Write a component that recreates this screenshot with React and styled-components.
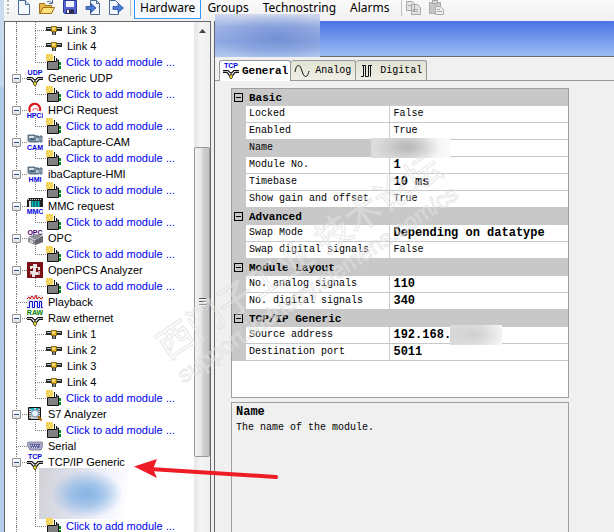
import React from 'react';
import styled, { createGlobalStyle, css } from 'styled-components';

const GlobalStyle = createGlobalStyle`
  * {
    box-sizing: border-box;
  }

  body {
    margin: 0;
    overflow: hidden;
    background: #f0f0f0;
    color: #000;
    font-family: "Liberation Sans", Arial, sans-serif;
    font-size: 11px;
  }

  button {
    margin: 0;
    padding: 0;
    border: 0;
    background: none;
    color: inherit;
    font: inherit;
  }

  svg {
    display: block;
    flex-shrink: 0;
  }
`;

/* ---------- window ---------- */

const Window = styled.div`
  position: relative;
  display: flex;
  height: 100vh;
  overflow: hidden;
`;

const WindowEdge = styled.div`
  width: 4px;
  background: linear-gradient(#c9dcf0, #c3d8ee 86px, #aecbe9 88px, #b4cdea);
`;

const Frame = styled.div`
  flex: 1;
  min-width: 0;
  display: flex;
  flex-direction: column;
`;

const Panels = styled.div`
  flex: 1;
  min-height: 0;
  display: flex;
  gap: 3px;
`;

/* ---------- toolbar ---------- */

const Toolbar = styled.div`
  display: flex;
  align-items: flex-start;
  height: 21px;
  padding-left: 3px;
  background: linear-gradient(#fafafa, #f0f0f0);
`;

const Grip = styled.div`
  width: 2px;
  height: 15px;
  margin-right: 7px;
  background: repeating-linear-gradient(#b8b8b8 0 2px, transparent 2px 4px);
`;

const ToolGroup = styled.div`
  display: flex;
  gap: 7px;
  padding-right: 3px;
`;

const ToolButton = styled.button`
  display: block;
  width: 16px;
  height: 16px;
`;

const Separator = styled.div`
  width: 1px;
  height: 16px;
  margin: 0 3px;
  background: #bdbdbd;
`;

const MenuButton = styled.button`
  height: 19px;
  padding: ${(p) => (p.$active ? '0 5px 2px' : '0 4px 2px')};
  margin-right: ${(p) => (p.$active ? '1px' : '4px')};
  border: 1px solid ${(p) => (p.$active ? '#3399ff' : 'transparent')};
  border-top: 0;
  background: ${(p) => (p.$active ? '#f7fafd' : 'transparent')};
  font-family: "Noto Sans", "Open Sans", sans-serif;
  font-size: 12px;
  line-height: 16px;
`;

/* ---------- module tree ---------- */

const TreePanel = styled.div`
  display: flex;
  width: 207px;
  border: 1px solid #666;
  border-bottom: 0;
  background: #fff;
`;

const Tree = styled.ul`
  flex: 1;
  min-width: 0;
  margin: 0;
  padding: 0;
  list-style: none;
  overflow: hidden;
`;

const TreeRow = styled.li`
  position: relative;
  display: flex;
  align-items: center;
  height: 16px;
  padding-left: 11px;
  white-space: nowrap;
`;

const HiddenRows = styled(TreeRow)`
  height: 48px;
`;

// Dotted connector: upper half turns into the horizontal arm, lower half runs on.
const Guide = styled.span`
  display: flex;
  flex-direction: column;
  align-self: stretch;
  width: 11px;
  margin-right: ${(p) => (p.$pass ? '8px' : 0)};
  flex-shrink: 0;

  &::before,
  &::after {
    content: "";
    flex: 1;
    border-left: 1px dotted #808080;
  }

  ${(p) => !p.$pass && css`
    &::before {
      border-bottom: 1px dotted #808080;
    }
  `}

  ${(p) => p.$last && css`
    &::after {
      border-left-color: transparent;
    }
  `}
`;

const Toggle = styled.button`
  position: absolute;
  left: 7px;
  top: 4px;
  width: 9px;
  height: 9px;
  border: 1px solid #919191;
  border-radius: 1px;
  background: linear-gradient(#2f4f9f, #2f4f9f) center / 5px 1px no-repeat,
    linear-gradient(#fff, #dedede);
`;

const TreeLabel = styled.span`
  margin-left: 5px;
`;

const AddLink = styled.a`
  margin-left: 4px;
  color: #0000f0;
  text-decoration: none;
`;

const TreeMask = styled.span`
  position: absolute;
  left: 34px;
  top: -2px;
  width: 88px;
  height: 51px;
  background: radial-gradient(ellipse 36px 24px at 48px 26px, #85b4e4, rgba(133, 180, 228, 0.7) 45%, rgba(133, 180, 228, 0)),
    linear-gradient(100deg, #d2d2d6, #dddfec 40%, #f3f4fd 75%, #fff);
`;

const ScrollBar = styled.div`
  display: flex;
  flex-direction: column;
  width: 16px;
  background: linear-gradient(90deg, #e6e6e6, #f4f4f4 40%, #efefef);
`;

const ScrollUp = styled.button`
  display: flex;
  align-items: center;
  justify-content: center;
  height: 17px;
`;

const ScrollSpace = styled.div`
  flex: ${(p) => p.$share};
`;

const ScrollThumb = styled.div`
  flex: 310;
  display: flex;
  align-items: center;
  justify-content: center;
  border: 1px solid #979797;
  border-radius: 2px;
  background: linear-gradient(90deg, #f5f5f5, #e6e6e6 45%, #cfcfd2 60%, #c4c4c8);
`;

const ThumbGrip = styled.span`
  width: 7px;
  height: 8px;
  background: repeating-linear-gradient(#555 0 1px, #fff 1px 2px, transparent 2px 3px);
`;

/* ---------- module settings ---------- */

const Settings = styled.div`
  flex: 1;
  min-width: 0;
  display: flex;
  flex-direction: column;
  border-left: 1px solid #666;
`;

const TitleBar = styled.div`
  position: relative;
  height: 36px;
  border-bottom: 1px solid #6a6a6a;
  background: linear-gradient(#4a72e4, #9cbdf3);
`;

const TitleMask = styled.div`
  position: absolute;
  left: 0;
  top: -7px;
  width: 105px;
  height: 43px;
  background: radial-gradient(ellipse 64px 24px at 62px 24px, rgba(108, 138, 210, 0.8), rgba(113, 143, 214, 0)),
    linear-gradient(#d3daee, #9fb3e4 30%, #90abe3 65%, #b0c7ee);
`;

const Tabs = styled.div`
  display: flex;
  align-items: flex-end;
  height: 24px;
  padding-left: 4px;
  border-bottom: 1px solid #9a9a9a;
`;

const Tab = styled.button`
  display: flex;
  align-items: center;
  gap: 5px;
  height: 20px;
  padding: 0 4px 0 3px;
  border: 1px solid #919b9c;
  border-left-width: ${(p) => (p.$active ? '1px' : 0)};
  border-bottom: 0;
  border-radius: 3px 3px 0 0;
  background: ${(p) => (p.$active ? '#fff' : 'linear-gradient(#e2e2d4, #efefe6)')};
  font-family: "Liberation Mono", monospace;
  font-size: ${(p) => (p.$active ? '11px' : '10px')};
  font-weight: ${(p) => (p.$active ? 'bold' : 'normal')};

  ${(p) => p.$active && css`
    gap: 3px;
    height: 21px;
    margin-bottom: -1px;
    padding-right: 2px;
  `}
`;

const TabPage = styled.div`
  flex: 1;
  min-height: 0;
  display: flex;
  flex-direction: column;
  gap: 4px;
  padding: 7px 45px 0 16px;
  font-family: "Liberation Mono", monospace;
`;

const GridBox = styled.div`
  padding-bottom: 36px;
  border: 1px solid #9f9f9f;
  background: #fff;
`;

const PropertyTable = styled.table`
  width: 100%;
  border-collapse: separate;
  border-spacing: 0;
  table-layout: fixed;
  font-size: 10px;
  line-height: 16px;
  text-align: left;
  white-space: nowrap;
`;

const GutterCol = styled.col`
  width: 14px;
`;

const NameCol = styled.col`
  width: 43%;
`;

const Gutter = styled.td`
  height: 17px;
  padding: 0;
  background: #c8c8c8;
`;

const GroupHead = styled.th`
  padding: 0 3px;
  height: 17px;
  background: #c8c8c8;
  font-size: 11px;
`;

const GroupToggle = styled.button`
  display: block;
  width: 9px;
  height: 9px;
  margin-left: 2px;
  border: 1px solid #000;
  background: linear-gradient(#000, #000) center / 5px 1px no-repeat;
`;

const NameCell = styled.th`
  padding: 0 3px;
  border-right: 1px solid #c8c8c8;
  border-bottom: 1px solid #c8c8c8;
  background: ${(p) => (p.$selected ? '#c8c8c8' : '#fff')};
  font-weight: normal;
`;

const ValueCell = styled.td`
  position: relative;
  padding: 0 3px;
  border-bottom: 1px solid #c8c8c8;
  font-size: ${(p) => (p.$bold ? '12px' : '10px')};
  font-weight: ${(p) => (p.$bold ? 'bold' : 'normal')};
`;

const ValueMask = styled.span`
  position: absolute;
  top: -2px;
  left: ${(p) => p.$left};
  width: ${(p) => p.$width};
  height: 20px;
  background: radial-gradient(ellipse 34px 18px at 45% 45%, ${(p) => p.$tone}, transparent),
    linear-gradient(90deg, #dcdcdc, #fafafa);
`;

const HelpBox = styled.div`
  flex: 1;
  padding: 1px 4px;
  border: 1px solid #9f9f9f;
  border-bottom: 0;
  font-size: 10px;
  line-height: 16px;
`;

const HelpTitle = styled.div`
  font-size: 12px;
  font-weight: bold;
`;

/* ---------- overlays ---------- */

const Watermark = styled.div`
  position: absolute;
  left: 140px;
  top: 236px;
  transform: rotate(-34deg);
  pointer-events: none;
  color: rgba(255, 255, 255, 0.3);
  font-family: "Liberation Sans", "Noto Sans CJK SC", sans-serif;
  font-size: 23px;
  line-height: 26px;
  white-space: nowrap;
  -webkit-text-stroke: 1px rgba(214, 214, 214, 0.6);
`;

const WatermarkTitle = styled.div`
  font-size: 36px;
  line-height: 38px;
`;

const ArrowMark = styled.svg`
  position: absolute;
  left: 130px;
  top: 455px;
  pointer-events: none;
`;

/* ---------- icons ---------- */

const Icon = ({ children, size = 16 }) => (
  <svg width={size} height={size} viewBox="0 0 16 16" aria-hidden="true">{children}</svg>
);

const Tag = ({ y, color = '#0000e0', children }) => (
  <text x="8" y={y} fill={color} textAnchor="middle" fontFamily="Liberation Sans" fontSize="7" fontWeight="bold">
    {children}
  </text>
);

const Junction = () => (
  <g>
    <path d="M0 7.500h5l3 3 3-3h5M0 9.500h4l2.500 3M16 9.500h-4l-2.500 3" fill="none" stroke="#111" strokeWidth="1.200" />
    <path d="M0 8.500h4M12 8.500h4" stroke="#aaa" />
    <path d="M8 10v3" stroke="#777" strokeWidth="2" />
    <path d="M6.500 12.500l1.500-1 1.500 1v2L8 16l-1.500-1.500z" fill="#e8d020" stroke="#333" strokeWidth=".8" />
  </g>
);

const Camera = () => (
  <g>
    <path d="M1 1h7l1 1h3v6H3L1 7z" fill="#7890a4" stroke="#3e5262" strokeWidth=".8" />
    <path d="M2 2h5v2H2z" fill="#d6e4ee" />
    <path d="M9 4h3v3H9z" fill="#a9c4d6" />
    <path d="M13 2h2v6h-2z" fill="#b8cbd9" stroke="#31475a" strokeWidth=".8" />
    <path d="M3 5h5" stroke="#263c4c" />
  </g>
);

const icons = {
  link: (
    <Icon>
      <path d="M0 5h16v4H0z" fill="#2b2b2b" />
      <path d="M1 6.500h14" stroke="#b5b5b5" />
      <path d="M6 9h4v4H6z" fill="#333" />
      <path d="M8 9v4" stroke="#c8c8c8" />
      <path d="M5.500 4.500h5v5h-5z" fill="#f0b820" stroke="#8a6c14" />
      <path d="M6.500 5.500h2v2h-2z" fill="#fff3b0" />
    </Icon>
  ),
  add: (
    <Icon>
      <path d="M1.500 7.500h9V6h2v9.500h-11z" fill="#808080" stroke="#111" />
      <path d="M8.500 2v5M10.500 4v3" stroke="#111" />
      <path d="M13 8h2v3h-2zM13 12h2v3h-2z" fill="#008a10" />
      <path d="M0 0h7v7H0z" fill="#ffe680" />
      <path d="M3.500 0v7M0 3.500h7M.5.5l6 6M6.500.5l-6 6" stroke="#e9b914" />
      <path d="M2.500 2.500h2v2h-2z" fill="#fffbd8" />
    </Icon>
  ),
  udp: <Icon><Junction /><Tag y="5">UDP</Tag></Icon>,
  tcp: <Icon><Junction /><Tag y="5">TCP</Tag></Icon>,
  raw: <Icon><Junction /><Tag y="5" color="#008000">RAW</Tag></Icon>,
  hpci: (
    <Icon>
      <path d="M3 10A5.500 5.500 0 1 1 13 9" fill="none" stroke="#d91920" strokeWidth="2.200" />
      <path d="M6 9a2.500 2.500 0 1 1 5 0" fill="none" stroke="#f27878" strokeWidth="1.200" />
      <Tag y="16">HPCi</Tag>
    </Icon>
  ),
  cam: <Icon><Camera /><Tag y="16">CAM</Tag></Icon>,
  hmi: <Icon><Camera /><Tag y="16">HMI</Tag></Icon>,
  mmc: (
    <Icon>
      <path d="M0 2l2-2h14v9H0z" fill="#222" />
      <path d="M2 3h2v6H2z" fill="#ddd" />
      <path d="M5.500 3v6M8.500 3v6M11.500 3v6" stroke="#00c4c4" strokeWidth="2" />
      <path d="M1 1.500h14" stroke="#ccc" strokeDasharray="1 1" />
      <Tag y="16">MMC</Tag>
    </Icon>
  ),
  opc: (
    <Icon>
      <path d="M1 7l8-3 7 2v6l-8 3-7-3z" fill="#8f8f98" />
      <path d="M1 7l7 3 8-4" fill="none" stroke="#dcdce0" />
      <path d="M8 10v5l8-3V6z" fill="#66666d" />
      <path d="M3 10l3 1v2l-3-1z" fill="#ddd" />
      <Tag y="5" color="#4b006e">OPC</Tag>
    </Icon>
  ),
  openpcs: (
    <Icon>
      <path d="M0 0h16v16H0z" fill="#7c1118" />
      <path d="M3 7V4h3V2h4v3h3v3h-2V6H9v4h2v3H8v2H5v-3H3V9h3V6H5v1z" fill="#e9e3e3" />
      <path d="M11 9h2v4h-2zM3 10h1v3H3z" fill="#c9a9ab" />
    </Icon>
  ),
  playback: (
    <Icon>
      <path d="M0 1h16v14H0z" fill="#e3e8ee" />
      <path d="M0 5l2-2 1 2 2-3 2 3 2-4 1 4 2-2 2 2 2-2" fill="none" stroke="#e01010" />
      <path d="M0 13.500h2.500v-6h3v6h2v-6h3v6h2v-6h2v6H16" fill="none" stroke="#1010e0" />
    </Icon>
  ),
  s7: (
    <Icon>
      <path d="M1.500 1.500h12v12h-12z" fill="#c8d0d6" stroke="#111" />
      <path d="M3 2v11M12 2v11" stroke="#111" strokeDasharray="1 1" />
      <path d="M4 3h3M9 3h2" stroke="#00b7c8" strokeWidth="2" />
      <circle cx="8" cy="7.500" r="3.500" fill="#e2f2ff" stroke="#78909f" />
      <path d="M11 10.500l3.500 4" stroke="#b07018" strokeWidth="2.500" />
    </Icon>
  ),
  serial: (
    <Icon>
      <path d="M1 4h14l1 3-2 5H3L0 7z" fill="#a9a9c6" stroke="#77779a" strokeWidth=".8" />
      <path d="M3 6h10l-1 4H4z" fill="#5c5c98" />
      <path d="M4 7.500h8M5 9.500h6" stroke="#e0e0f0" strokeDasharray="1 1" />
    </Icon>
  ),
  analog: (
    <Icon>
      <path d="M1 9C2 4 3 2.500 4.500 2.500S7 5 8 8s2 5.500 3.500 5.500S14 12 15 8" fill="none" stroke="#111" />
    </Icon>
  ),
  digital: (
    <Icon>
      <path d="M2 13.500h2.500v-11h2v11h3v-11h2v11M3 2.500h2M11 2.500h2" fill="none" stroke="#111" />
    </Icon>
  ),
  file: (
    <Icon>
      <path d="M2.500.5h7l4 4v10h-11z" fill="#f4f9ff" stroke="#4b6b95" />
      <path d="M9.500.5v4h4" fill="#cfe0f4" stroke="#4b6b95" />
    </Icon>
  ),
  open: (
    <Icon>
      <path d="M.5 13.500v-10h5l1 2h6v8z" fill="#e7b84a" stroke="#a06f13" />
      <path d="M1 13.500l3-6h11.500l-3 6z" fill="#ffdf7e" stroke="#a06f13" />
      <path d="M8 2q3-2 5 1M13.500 0v3.500H10" fill="none" stroke="#4c6e9e" />
    </Icon>
  ),
  save: (
    <Icon>
      <path d="M1.500.5h13v13h-12l-1-1z" fill="#5464d4" stroke="#2c3994" />
      <path d="M4 1h8v6H4z" fill="#eef1ff" />
      <path d="M4 9.500h8v4H4z" fill="#2a2a48" />
      <path d="M5 10h2v3H5z" fill="#eee" />
    </Icon>
  ),
  importFile: (
    <Icon>
      <path d="M5.500.5h6l3 3v11h-9z" fill="#f4f9ff" stroke="#4b6b95" />
      <path d="M11.500.5v3h3" fill="none" stroke="#4b6b95" />
      <path d="M1 6.500h5V3.500l5 4.500-5 4.500v-3H1z" fill="#4f7ed8" stroke="#234f9c" strokeWidth=".8" />
    </Icon>
  ),
  exportFile: (
    <Icon>
      <path d="M1.500.5h6l3 3v11h-9z" fill="#f4f9ff" stroke="#4b6b95" />
      <path d="M5 6.500h5V3.500l5.500 4.500-5.500 4.500v-3H5z" fill="#4f7ed8" stroke="#234f9c" strokeWidth=".8" />
    </Icon>
  ),
  copy: (
    <Icon>
      <path d="M1.500 1.500h6l2 2v7h-8zM6.500 4.500h6l3 3v7h-9z" fill="#e2e2e2" stroke="#a9a9a9" />
      <path d="M3 5.500h3M8 9.500h5M8 11.500h5" stroke="#a9a9a9" />
    </Icon>
  ),
  paste: (
    <Icon>
      <path d="M1.500 2.500h11v11h-11z" fill="#c6c6c6" stroke="#a9a9a9" />
      <path d="M4.500.5h5v3h-5z" fill="#ddd" stroke="#a0a0a0" />
      <path d="M7.500 6.500h5l3 3v5h-8z" fill="#eee" stroke="#a9a9a9" />
      <path d="M9 9.500h3M9 11.500h5" stroke="#a9a9a9" />
    </Icon>
  ),
};

/* ---------- data ---------- */

const link = (label) => ({ icon: 'link', label, level: 1 });
const root = (icon, label, leaf) => ({ icon, label, level: 0, leaf });
const add = { icon: 'add', label: 'Click to add module ...', level: 1, add: true };

const treeRows = [
  link('Link 3'), link('Link 4'), add,
  root('udp', 'Generic UDP'), add,
  root('hpci', 'HPCi Request'), add,
  root('cam', 'ibaCapture-CAM'), add,
  root('hmi', 'ibaCapture-HMI'), add,
  root('mmc', 'MMC request'), add,
  root('opc', 'OPC'), add,
  root('openpcs', 'OpenPCS Analyzer'), add,
  root('playback', 'Playback', true),
  root('raw', 'Raw ethernet'),
  link('Link 1'), link('Link 2'), link('Link 3'), link('Link 4'), add,
  root('s7', 'S7 Analyzer'), add,
  root('serial', 'Serial', true),
  root('tcp', 'TCP/IP Generic'),
  { hidden: true },
  add,
];

const groups = [
  {
    title: 'Basic',
    items: [
      { name: 'Locked', value: 'False' },
      { name: 'Enabled', value: 'True' },
      { name: 'Name', value: '', selected: true, mask: { $left: '-19px', $width: '79px', $tone: '#b5b5b5' } },
      { name: 'Module No.', value: '1', bold: true },
      { name: 'Timebase', value: '10 ms', bold: true },
      { name: 'Show gain and offset', value: 'True' },
    ],
  },
  {
    title: 'Advanced',
    items: [
      { name: 'Swap Mode', value: 'Depending on datatype', bold: true },
      { name: 'Swap digital signals', value: 'False' },
    ],
  },
  {
    title: 'Module Layout',
    items: [
      { name: 'No. analog signals', value: '110', bold: true },
      { name: 'No. digital signals', value: '340', bold: true },
    ],
  },
  {
    title: 'TCP/IP Generic',
    items: [
      { name: 'Source address', value: '192.168.', bold: true, mask: { $left: '60px', $width: '52px', $tone: '#cfcfcf' } },
      { name: 'Destination port', value: '5011', bold: true },
    ],
  },
];

/* ---------- components ---------- */

function TreeItem({ row }) {
  if (row.hidden) {
    return (
      <HiddenRows>
        <Guide $pass />
        <Guide $pass />
        <TreeMask />
      </HiddenRows>
    );
  }

  if (row.level === 0) {
    return (
      <TreeRow>
        <Guide />
        {!row.leaf && <Toggle aria-label={`Collapse ${row.label}`} />}
        {icons[row.icon]}
        <TreeLabel>{row.label}</TreeLabel>
      </TreeRow>
    );
  }

  return (
    <TreeRow>
      <Guide $pass />
      <Guide $last={row.add} />
      {icons[row.icon]}
      {row.add ? <AddLink href="#add">{row.label}</AddLink> : <TreeLabel>{row.label}</TreeLabel>}
    </TreeRow>
  );
}

function PropertyGrid() {
  return (
    <PropertyTable>
      <colgroup>
        <GutterCol />
        <NameCol />
        <col />
      </colgroup>
      {groups.map((group) => (
        <tbody key={group.title}>
          <tr>
            <Gutter><GroupToggle aria-label={`Collapse ${group.title}`} /></Gutter>
            <GroupHead colSpan={2} scope="rowgroup">{group.title}</GroupHead>
          </tr>
          {group.items.map((item) => (
            <tr key={item.name}>
              <Gutter />
              <NameCell scope="row" $selected={item.selected}>{item.name}</NameCell>
              <ValueCell $bold={item.bold}>
                {item.value}
                {item.mask && <ValueMask {...item.mask} />}
              </ValueCell>
            </tr>
          ))}
        </tbody>
      ))}
    </PropertyTable>
  );
}

function App() {
  return (
    <>
      <GlobalStyle />
      <Window>
        <WindowEdge />
        <Frame>
          <Toolbar>
            <Grip />
            <ToolGroup>
              <ToolButton aria-label="New">{icons.file}</ToolButton>
              <ToolButton aria-label="Open">{icons.open}</ToolButton>
              <ToolButton aria-label="Save">{icons.save}</ToolButton>
              <ToolButton aria-label="Import">{icons.importFile}</ToolButton>
              <ToolButton aria-label="Export">{icons.exportFile}</ToolButton>
            </ToolGroup>
            <Separator />
            <MenuButton $active>Hardware</MenuButton>
            <MenuButton>Groups</MenuButton>
            <MenuButton>Technostring</MenuButton>
            <MenuButton>Alarms</MenuButton>
            <Separator />
            <ToolGroup>
              <ToolButton aria-label="Copy">{icons.copy}</ToolButton>
              <ToolButton aria-label="Paste">{icons.paste}</ToolButton>
            </ToolGroup>
          </Toolbar>

          <Panels>
            <TreePanel>
              <Tree>
                {treeRows.map((row, i) => <TreeItem key={i} row={row} />)}
              </Tree>
              <ScrollBar>
                <ScrollUp aria-label="Scroll up">
                  <svg width="7" height="4" viewBox="0 0 7 4"><path d="M0 4l3.500-4L7 4z" fill="#444" /></svg>
                </ScrollUp>
                <ScrollSpace $share={108} />
                <ScrollThumb><ThumbGrip /></ScrollThumb>
                <ScrollSpace $share={75} />
              </ScrollBar>
            </TreePanel>

            <Settings>
              <TitleBar><TitleMask /></TitleBar>
              <Tabs role="tablist">
                <Tab role="tab" aria-selected="true" $active>{icons.tcp}General</Tab>
                <Tab role="tab" aria-selected="false">{icons.analog}Analog</Tab>
                <Tab role="tab" aria-selected="false">{icons.digital}Digital</Tab>
              </Tabs>
              <TabPage role="tabpanel">
                <GridBox>
                  <PropertyGrid />
                </GridBox>
                <HelpBox>
                  <HelpTitle>Name</HelpTitle>
                  The name of the module.
                </HelpBox>
              </TabPage>
            </Settings>
          </Panels>
        </Frame>

        <Watermark>
          <WatermarkTitle>西门子工业 技术论坛</WatermarkTitle>
          support.industry.siemens.com/cs
        </Watermark>
        <ArrowMark width="150" height="30" viewBox="0 0 150 30" aria-hidden="true">
          <path d="M20 14L146 22" stroke="#ee1c25" strokeWidth="4" strokeLinecap="round" />
          <path d="M4 11.500L27 4l-4 10 4 9z" fill="#ee1c25" />
        </ArrowMark>
      </Window>
    </>
  );
}

export default App;
